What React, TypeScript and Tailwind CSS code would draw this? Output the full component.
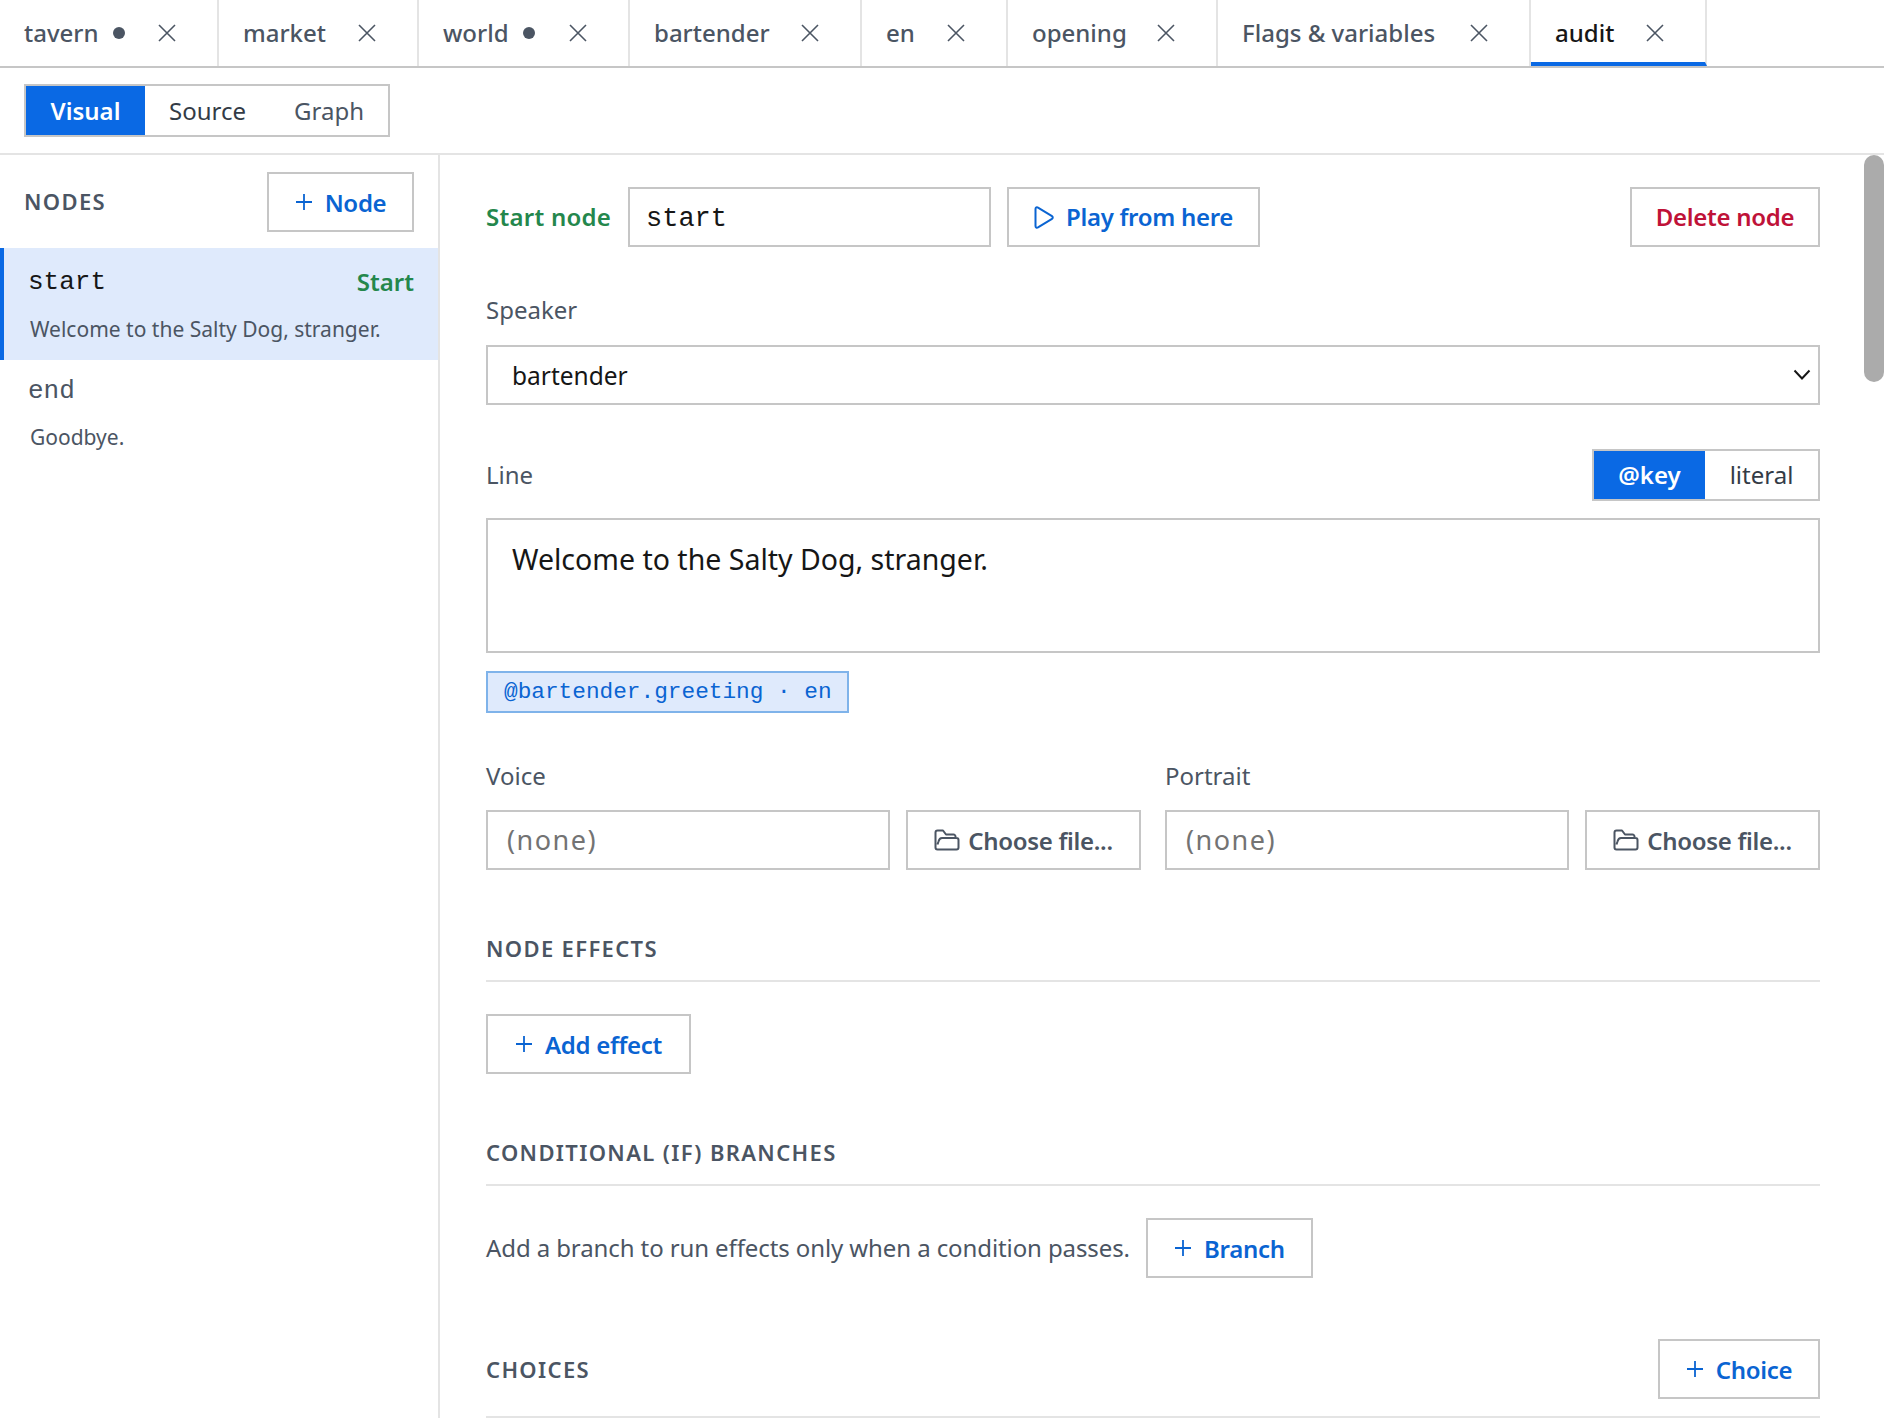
import React from "react"

const sans = "font-['Noto_Sans',sans-serif]"
const mono = "font-['Liberation_Mono',monospace]"
const btnText = "text-[24px] font-semibold tracking-[-0.3px]"

const tabs = [
    { name: "tavern", w: "w-[219px]", dot: true },
    { name: "market", w: "w-[200px]" },
    { name: "world", w: "w-[211px]", dot: true },
    { name: "bartender", w: "w-[232px]" },
    { name: "en", w: "w-[146px]" },
    { name: "opening", w: "w-[210px]" },
    { name: "Flags & variables", w: "w-[313px]" },
    { name: "audit", w: "w-[176px]", active: true },
]

const CloseIcon = () => (
    <svg width="18" height="18" viewBox="0 0 18 18" fill="none" stroke="currentColor" strokeWidth="1.6" className="shrink-0">
        <path d="M1 1L17 17M17 1L1 17" />
    </svg>
)

const PlusIcon = () => (
    <svg width="18" height="18" viewBox="0 0 18 18" fill="none" stroke="currentColor" strokeWidth="1.8" className="shrink-0">
        <path d="M9 1V17M1 9H17" />
    </svg>
)

const FolderIcon = () => (
    <svg width="26" height="22" viewBox="0 0 26 22" fill="none" stroke="currentColor" strokeWidth="2" strokeLinejoin="round" className="shrink-0">
        <path d="M21.500 9V7.500C21.500 6.400 20.600 5.500 19.500 5.500H12L9 1.500H3.500C2.400 1.500 1.500 2.400 1.500 3.500V18.500C1.500 19.600 2.400 20.500 3.500 20.500H22.500C23.600 20.500 24.500 19.600 24.500 18.500V11C24.500 9.900 23.600 9 22.500 9H8C6 9 5 10.500 4.500 12.500L3.500 15.500" />
    </svg>
)

const AddButton = ({ label, className }: { label: string; className: string }) => (
    <button className={`flex h-[60px] shrink-0 items-center justify-center gap-3 border-2 border-[#c6c6c6] bg-white text-[#0a64d2] ${btnText} ${className}`}>
        <PlusIcon />
        <span className="pt-[2px]">{label}</span>
    </button>
)

const FileField = () => (
    <div className="flex gap-4">
        <input readOnly placeholder="(none)" className={`h-[60px] w-[404px] border-2 border-[#c6c6c6] px-[19px] pb-[2px] text-[27px] tracking-[1.5px] placeholder-[#737373] outline-none ${sans}`} />
        <button className={`flex h-[60px] w-[235px] items-center justify-center gap-2 border-2 border-[#c6c6c6] text-[#4b5563] ${btnText}`}>
            <FolderIcon />
            <span className="pt-[2px]">Choose file...</span>
        </button>
    </div>
)

const SectionTitle = ({ children }: { children: React.ReactNode }) => (
    <h3 className="text-[22px] font-semibold tracking-[1.35px] text-[#4b5563]">{children}</h3>
)

export default function App() {
    return (
        <div className={`flex h-screen flex-col overflow-hidden bg-white text-[#161616] ${sans}`}>
            <div className="flex h-[68px] shrink-0 border-b-2 border-[#c6c6c6]">
                {tabs.map((tab) => (
                    <div
                        key={tab.name}
                        className={`flex h-[66px] items-center justify-between border-r-2 border-[#e4e4e4] pl-6 pr-[41px] text-[24px] font-medium ${tab.w} ${tab.active ? "border-b-4 border-b-[#0a69e4] pt-1 text-[#161616]" : "text-[#4b5563]"}`}
                    >
                        <div className="flex items-center gap-[14px]">
                            <span>{tab.name}</span>
                            {tab.dot && <span className="h-3 w-3 rounded-full bg-[#4b5563]" />}
                        </div>
                        <span className="text-[#4b5563]"><CloseIcon /></span>
                    </div>
                ))}
            </div>

            <div className="flex h-[87px] shrink-0 items-start border-b-2 border-[#e4e4e4] px-6 pt-4">
                <div className="flex h-[53px] w-[366px] border-2 border-[#c6c6c6] text-[24px]">
                    <div className="flex w-[119px] items-center justify-center bg-[#0a69e4] pt-px font-semibold text-white">Visual</div>
                    <div className="flex w-[125px] items-center justify-center pt-px text-[#333b46]">Source</div>
                    <div className="flex flex-1 items-center justify-center pt-px text-[#4b5563]">Graph</div>
                </div>
            </div>

            <div className="relative flex min-h-0 flex-1">
                <aside className="w-[440px] shrink-0 border-r-2 border-[#e4e4e4]">
                    <div className="flex h-[93px] items-center justify-between px-6 pr-6">
                        <span className="text-[22px] font-semibold tracking-[1.35px] text-[#4b5563]">NODES</span>
                        <AddButton label="Node" className="w-[147px]" />
                    </div>
                    <div className="h-[112px] border-l-4 border-[#0a69e4] bg-[#dfeafc] pl-6 pr-6">
                        <div className="flex items-center justify-between pt-[15px]">
                            <span className={`text-[26px] ${mono}`}>start</span>
                            <span className="pb-[2px] text-[24px] font-semibold text-[#24874c]">Start</span>
                        </div>
                        <p className="mt-[12px] pl-[2px] text-[21px] text-[#4b5563]">Welcome to the Salty Dog, stranger.</p>
                    </div>
                    <div className="pl-7 pr-6 pt-3">
                        <span className={`text-[26px] text-[#4b5563] ${mono}`}>end</span>
                        <p className="mt-[11px] pl-[2px] text-[21px] text-[#4b5563]">Goodbye.</p>
                    </div>
                </aside>

                <main className="min-w-0 flex-1 overflow-hidden pl-[46px] pr-[64px] pt-8">
                    <div className="flex items-center">
                        <span className="w-[142px] text-[24px] font-semibold tracking-[0.25px] text-[#24874c]">Start node</span>
                        <input readOnly value="start" className={`h-[60px] w-[363px] border-2 border-[#c6c6c6] px-4 pt-1 text-[27px] outline-none ${mono}`} />
                        <button className={`ml-4 flex h-[60px] w-[253px] items-center justify-center gap-3 border-2 border-[#c6c6c6] text-[#0a64d2] ${btnText}`}>
                            <svg width="20" height="23" viewBox="0 0 20 23" fill="none" stroke="currentColor" strokeWidth="2" strokeLinejoin="round" className="shrink-0">
                                <path d="M1.500 3C1.500 1.500 2.800 0.900 4 1.600L18 10.200C19 10.800 19 12.200 18 12.800L4 21.400C2.800 22.100 1.500 21.500 1.500 20V3Z" />
                            </svg>
                            <span>Play from here</span>
                        </button>
                        <button className={`ml-auto h-[60px] w-[190px] border-2 border-[#c6c6c6] text-[#bf1238] ${btnText}`}>Delete node</button>
                    </div>

                    <label className="mt-[47px] block text-[24px] leading-8 text-[#4b5563]">Speaker</label>
                    <div className="relative mt-[19px]">
                        <select defaultValue="bartender" className="h-[60px] w-full appearance-none border-2 border-[#c6c6c6] bg-white px-6 pt-[2px] text-[24.5px] text-[#161616] outline-none">
                            <option>bartender</option>
                        </select>
                        <svg width="18" height="12" viewBox="0 0 18 12" fill="none" stroke="#161616" strokeWidth="2" className="pointer-events-none absolute right-[9px] top-6">
                            <path d="M1.500 1.500L9 9.500L16.500 1.500" />
                        </svg>
                    </div>

                    <div className="mt-11 flex h-[52px] items-center justify-between">
                        <label className="text-[24px] text-[#4b5563]">Line</label>
                        <div className="flex h-[52px] w-[228px] border-2 border-[#c6c6c6] text-[24px]">
                            <div className="flex w-[111px] items-center justify-center bg-[#0a69e4] font-semibold text-white">@key</div>
                            <div className="flex flex-1 items-center justify-center text-[#333b46]">literal</div>
                        </div>
                    </div>
                    <textarea readOnly defaultValue="Welcome to the Salty Dog, stranger." className="mt-[17px] block h-[135px] w-full resize-none border-2 border-[#c6c6c6] px-6 py-5 text-[28.5px] leading-[38px] text-[#161616] outline-none" />

                    <div className={`mt-[18px] flex h-[42px] w-[363px] items-center whitespace-nowrap border-2 border-[#7fb3ea] bg-[#dfeafc] pl-4 text-[22.75px] text-[#0a64d2] ${mono}`}>
                        @bartender.greeting · en
                    </div>

                    <div className="mt-[47px] flex gap-6">
                        <div className="w-[655px]">
                            <label className="block text-[24px] leading-8 text-[#4b5563]">Voice</label>
                            <div className="mt-[18px]"><FileField /></div>
                        </div>
                        <div className="w-[655px]">
                            <label className="block text-[24px] leading-8 text-[#4b5563]">Portrait</label>
                            <div className="mt-[18px]"><FileField /></div>
                        </div>
                    </div>

                    <div className="mt-[61px] flex h-[34px] items-center">
                        <SectionTitle>NODE EFFECTS</SectionTitle>
                    </div>
                    <div className="mt-[15px] border-t-2 border-[#e4e4e4]" />
                    <AddButton label="Add effect" className="mt-8 w-[205px]" />

                    <div className="mt-[61px] flex h-[34px] items-center">
                        <SectionTitle>CONDITIONAL (IF) BRANCHES</SectionTitle>
                    </div>
                    <div className="mt-[15px] border-t-2 border-[#e4e4e4]" />
                    <div className="mt-8 flex items-center gap-4">
                        <span className="text-[24px] tracking-[-0.1px] text-[#4b5563]">Add a branch to run effects only when a condition passes.</span>
                        <AddButton label="Branch" className="w-[167px]" />
                    </div>

                    <div className="mt-[61px] flex items-center justify-between">
                        <SectionTitle>CHOICES</SectionTitle>
                        <AddButton label="Choice" className="w-[162px]" />
                    </div>
                    <div className="mt-[17px] border-t-2 border-[#e4e4e4]" />
                </main>

                <div className="absolute right-0 top-0 h-[227px] w-[20px] rounded-full bg-[#ababab]" />
            </div>
        </div>
    )
}
